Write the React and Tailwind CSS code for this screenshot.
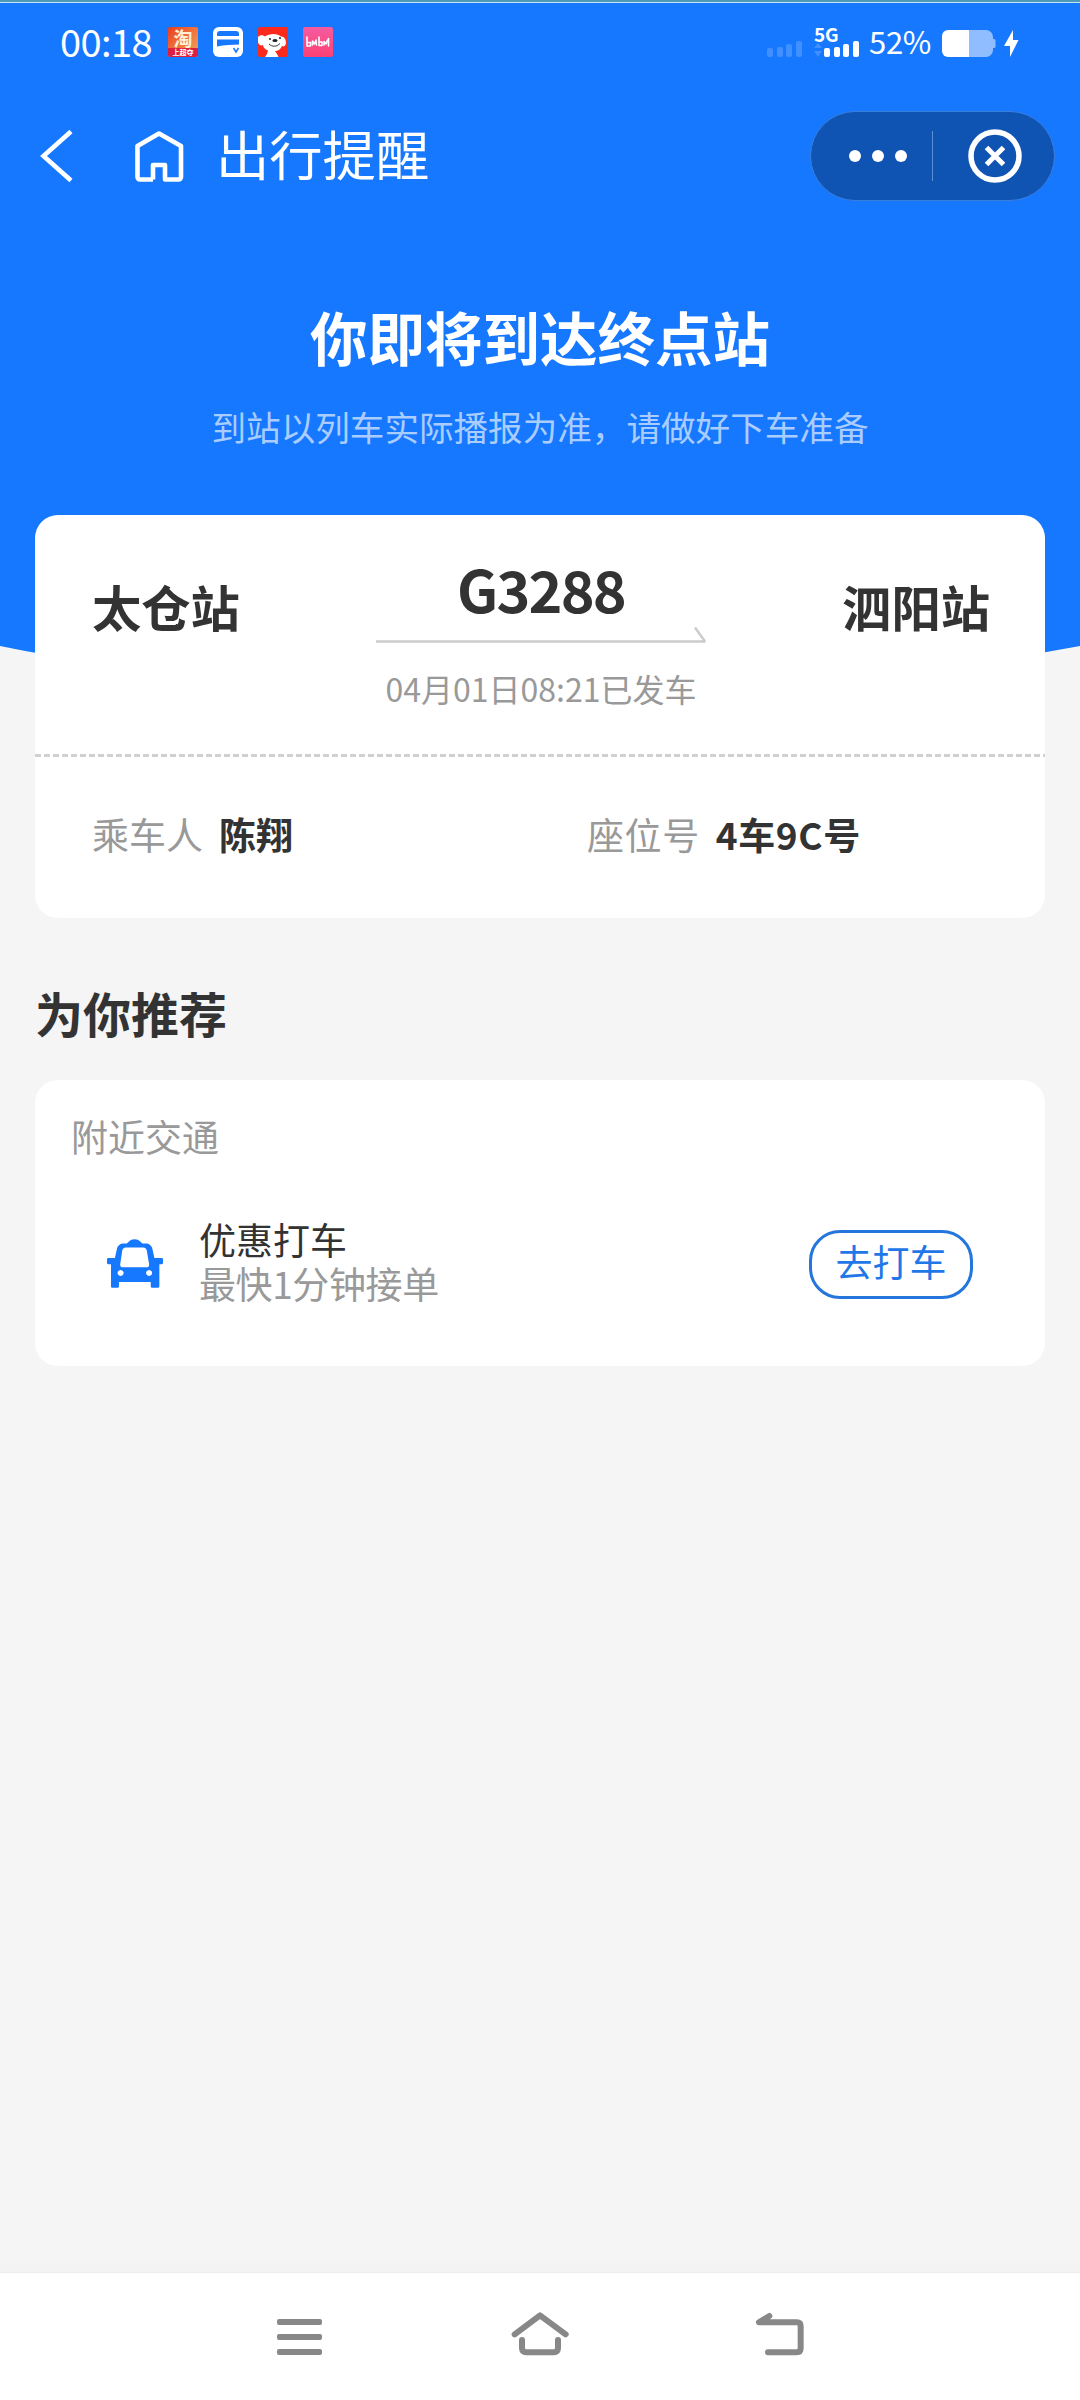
import clsx from 'clsx'

const trip = {
  from: '太仓站',
  to: '泗阳站',
  train: 'G3288',
  departure: '04月01日08:21已发车',
}

const details = [
  { label: '乘车人', value: '陈翔', className: 'w-[495px]' },
  { label: '座位号', value: '4车9C号', className: 'tracking-[0.6px]' },
]

const signalBars = [9, 10, 13, 16]

function Bars({ className }) {
  return (
    <div className="flex items-end gap-[3.7px]">
      {signalBars.map((h, i) => (
        <span key={i} className={clsx('w-[6px] rounded-[2px]', className)} style={{ height: h }} />
      ))}
    </div>
  )
}

function TaobaoIcon() {
  return (
    <div className="flex h-[30px] w-[30px] flex-col items-center rounded-[2px] bg-linear-to-br from-[#e8391f] to-[#f0a65a] font-bold">
      <span className="text-[19px] leading-[21px] text-[#fff1d6]">淘</span>
      <span className="w-full rounded-b-[2px] bg-[#dc1f40] text-center text-[7px] leading-[9px] whitespace-nowrap text-white">上超夺</span>
    </div>
  )
}

function CardIcon() {
  return (
    <svg width="30" height="30" viewBox="0 0 30 30">
      <rect width="30" height="30" rx="6" fill="#fff" />
      <path d="M7 4h16a3 3 0 0 1 3 3v2H4V7a3 3 0 0 1 3-3z" fill="#1677ff" />
      <path d="M4 12.500h22v5c-7 .3-14 .5-22 2z" fill="#1677ff" />
      <path d="M20.500 21l2.500 4 2.500-4" fill="none" stroke="#1677ff" strokeWidth="1.500" />
    </svg>
  )
}

function DogIcon() {
  return (
    <svg width="30" height="30" viewBox="0 0 30 30">
      <rect width="30" height="30" rx="2" fill="#fb2a1c" />
      <path
        d="M0 10C2 7.500 5 8 7 9.500c4-3.500 13-3.500 16 0 3-.5 5 3 5 6.500-.5 3-2 4-4 3-1 3-4 5-7 5l2 3 1.500 3H7l2-3 1-3.500c-3-1-5-3-5-5.500C3 19 .5 18 0 15z"
        fill="#fff"
      />
      <ellipse cx="17" cy="13.500" rx="2.600" ry="1.500" fill="#222" />
      <circle cx="12" cy="12" r="1" fill="#222" />
      <circle cx="22" cy="11" r="1" fill="#222" />
      <path d="M11 17c3 3 8 3 11-.5" fill="none" stroke="#222" strokeWidth="0.900" />
    </svg>
  )
}

function PinkIcon() {
  return (
    <div className="flex h-[30px] w-[30px] items-center justify-center rounded-[2px] bg-linear-to-b from-[#f45ba0] to-[#fd3f74]">
      <svg width="24" height="14" viewBox="0 0 24 14" fill="none" stroke="#fff" strokeWidth="1.600" strokeLinecap="round" strokeLinejoin="round">
        <path d="M1 2v9h3.500V7.500H2M6.500 10V6l2 3 1.500-4 .5 5M13 2v8.500h3V7h-2.500M18 10V6.500l2 2.500 1.500-4M22.500 3.500V11" />
      </svg>
    </div>
  )
}

function Battery() {
  return (
    <svg width="55" height="27" viewBox="0 0 55 27">
      <path d="M27 0h17a7 7 0 0 1 7 7v2h1a1.500 1.500 0 0 1 1.500 1.500v6A1.500 1.500 0 0 1 52 18h-1v2a7 7 0 0 1-7 7H27z" fill="#8fbdff" />
      <path d="M6 0h21v27H6a6 6 0 0 1-6-6V6a6 6 0 0 1 6-6z" fill="#fff" />
    </svg>
  )
}

function StatusBar() {
  return (
    <div className="flex h-[108px] items-start justify-between pr-[61px] pl-[60px] text-white">
      <div className="flex items-start pt-[24px]">
        <span className="-mt-[5px] w-[108px] text-[38px] leading-[38px] tracking-[-0.6px] whitespace-nowrap">00:18</span>
        <div className="flex gap-[15px]">
          <TaobaoIcon />
          <CardIcon />
          <DogIcon />
          <PinkIcon />
        </div>
      </div>

      <div className="flex h-[54px] items-end">
        <Bars className="bg-[#4090ff]" />
        <div className="ml-[12px] flex w-[45px] flex-col">
          <span className="text-[19px] leading-[15px] font-bold tracking-[-0.3px]">5G</span>
          <div className="flex items-end justify-between">
            <svg width="8" height="14" viewBox="0 0 8 14" fill="#4090ff">
              <path d="M4 0l4 5H0zM4 14L0 8h8z" />
            </svg>
            <Bars className="bg-white" />
          </div>
        </div>
        <span className="mb-px ml-[10px] w-[73px] text-[31px] leading-[31px] tracking-[-0.3px]">52%</span>
        <Battery />
        <svg width="15" height="27" viewBox="0 0 15 27" fill="#fff" className="ml-[7px]">
          <path d="M9 0v10h5.500L6 27V16H0z" />
        </svg>
      </div>
    </div>
  )
}

function TitleBar() {
  return (
    <div className="flex h-[89px] items-center justify-between pr-[25px] pl-[39px] text-white">
      <div className="flex items-center">
        <svg width="35" height="54" viewBox="0 0 35 54" fill="none" stroke="#fff" strokeWidth="4.600">
          <path d="M32 2.500L4.500 27 32 51.500" />
        </svg>
        <svg width="50" height="54" viewBox="0 0 50 54" fill="none" stroke="#fff" strokeWidth="4.600" strokeLinejoin="round" className="ml-[60px]">
          <path d="M19 50.500V36h12v14.500h13.500a2.500 2.500 0 0 0 2.500-2.500V17L25 4.500 3.500 17V48a2.500 2.500 0 0 0 2.500 2.500h13" />
        </svg>
        <span className="-mt-[5px] ml-[32px] text-[53.300px] leading-[60px]">出行提醒</span>
      </div>

      <div className="flex h-[90px] w-[245px] items-center rounded-full border border-[#3a7fdc] bg-[#0f53b3]">
        <div className="flex w-[121px] items-center gap-[11px] pl-[38px]">
          <span className="h-[12px] w-[12px] rounded-full bg-white" />
          <span className="h-[12px] w-[12px] rounded-full bg-white" />
          <span className="h-[12px] w-[12px] rounded-full bg-white" />
        </div>
        <span className="h-[50px] w-px bg-[#5b8fd6]" />
        <svg width="54" height="54" viewBox="0 0 54 54" fill="none" stroke="#fff" className="ml-[35px]">
          <circle cx="27" cy="27" r="24" strokeWidth="5.500" />
          <path d="M18.500 18.500l17 17M35.500 18.500l-17 17" strokeWidth="5" />
        </svg>
      </div>
    </div>
  )
}

function TripCard() {
  return (
    <div className="relative mx-[35px] -mt-[171px] h-[403px] rounded-[23px] bg-white text-[#333]">
      {/* Route */}
      <div className="flex h-[239px] items-start justify-between pr-[55px] pl-[57px]">
        <span className="w-[226px] pt-[61px] text-[49.300px] leading-[60px] font-bold">{trip.from}</span>
        <div className="flex w-[331px] flex-col items-center pt-[43px]">
          <span className="text-[57.500px] leading-[60px] font-bold tracking-[-1.800px]">{trip.train}</span>
          <svg width="331" height="18" viewBox="0 0 331 18" fill="none" stroke="#ccc" strokeWidth="2.500" className="mt-[8px]">
            <path d="M0 15.500h329L319 1.500" strokeLinejoin="bevel" />
          </svg>
          <span className="mt-[24px] text-[32px] leading-[40px] whitespace-nowrap text-[#999]">{trip.departure}</span>
        </div>
        <span className="w-[226px] pt-[61px] text-right text-[49.300px] leading-[60px] font-bold">{trip.to}</span>
      </div>

      <div className="h-[3px] bg-[repeating-linear-gradient(90deg,#d0d0d0_0_6px,transparent_6px_9px)]" />

      {/* Passenger and seat */}
      <div className="flex pt-[47px] pl-[57px] text-[37px] leading-[60px]">
        {details.map(d => (
          <div key={d.label} className={clsx('flex gap-[16px]', d.className)}>
            <span className="text-[#999]">{d.label}</span>
            <span className="font-bold">{d.value}</span>
          </div>
        ))}
      </div>
    </div>
  )
}

function TaxiIcon() {
  return (
    <svg width="56" height="49" viewBox="21 28 169 147" className="mt-[23px]">
      <path
        fillRule="evenodd"
        fill="#1677ff"
        d="M80 41c6-2 8-13 24-13s19 11 25 13h8c12 0 18 6 21 16l6 28h22q4 0 4 4v11q0 4-4 4h-7v67q0 4-4 4h-18q-4 0-4-4v-14H57v14q0 4-4 4H37q-4 0-4-4v-67h-8q-4 0-4-4V89q0-4 4-4h20l6-28c3-10 9-16 21-16zM78 53q-9 0-11 9l-6 41q-1 10 8 10h71q9 0 8-10l-7-41q-2-9-11-9zM62 121a9 9 0 1 0 .1 0zM148 121a9 9 0 1 0 .1 0z"
      />
    </svg>
  )
}

function NearbyCard() {
  return (
    <div className="mx-[35px] mt-[38px] h-[286px] rounded-[23px] bg-white pt-[36px] text-[37px]">
      <h3 className="pl-[36px] leading-[40px] text-[#999]">附近交通</h3>
      <div className="mt-[60px] flex items-start px-[72px]">
        <TaxiIcon />
        <div className="mt-px ml-[36px] flex flex-1 flex-col leading-[44px]">
          <span className="text-[#333]">优惠打车</span>
          <span className="tracking-[-0.400px] text-[#999]">最快1分钟接单</span>
        </div>
        <button className="mt-[14px] h-[69px] w-[164px] rounded-[31px] border-[3px] border-[#2475dc] pb-[6px] leading-[57px] whitespace-nowrap text-[#1f77e8]">
          去打车
        </button>
      </div>
    </div>
  )
}

function NavBar() {
  return (
    <div>
      <div className="h-[9px] bg-[#f3f3f3]" />
      <div className="flex h-[128px] items-start border-t border-[#ececec] bg-white pl-[277px]">
        <div className="mt-[46px] flex w-[45px] flex-col gap-[9px]">
          <span className="h-[6px] rounded-[2px] bg-[#888]" />
          <span className="h-[6px] rounded-[2px] bg-[#888]" />
          <span className="h-[6px] rounded-[2px] bg-[#888]" />
        </div>
        <svg width="58" height="44" viewBox="33 35 174 132" fill="none" stroke="#888" strokeWidth="18" strokeLinecap="round" strokeLinejoin="round" className="mt-[39px] ml-[189px]">
          <path d="M44 102L120 45l77 57M66 119v24q0 13 13 13h82q13 0 13-13v-24" />
        </svg>
        <svg width="50" height="44" viewBox="765 35 150 132" fill="none" stroke="#888" strokeWidth="18" strokeLinecap="round" strokeLinejoin="round" className="mt-[39px] ml-[186px]">
          <path d="M808 47L777 66h113q12 0 12 12v66q0 12-12 12h-86" />
        </svg>
      </div>
    </div>
  )
}

export default function App() {
  return (
    <div className="flex h-[2400px] w-[1080px] flex-col bg-[#f5f5f5] font-['Noto_Sans_CJK_SC',sans-serif]">
      <div className="h-[646px] shrink-0 bg-[#1677ff]">
        <div className="h-[2px] bg-[#4f9ab8]" />
        <div className="h-px bg-[#c4e6f5]" />
        <StatusBar />
        <TitleBar />
        <h1 className="mt-[96px] text-center text-[57.500px] leading-[80px] font-bold text-white">你即将到达终点站</h1>
        <p className="mt-[25px] text-center text-[34.600px] leading-[50px] text-[#a9cdff]">
          到站以列车实际播报为准，请做好下车准备
        </p>
      </div>
      <svg width="1080" height="40" viewBox="0 0 1080 40" className="shrink-0">
        <path d="M0 0Q200 42 540 40T1080 0z" fill="#1677ff" />
      </svg>

      <TripCard />

      <h2 className="mt-[64px] pl-[35px] text-[48px] leading-[60px] font-bold text-[#333]">为你推荐</h2>
      <NearbyCard />

      <div className="flex-1" />
      <NavBar />
    </div>
  )
}
